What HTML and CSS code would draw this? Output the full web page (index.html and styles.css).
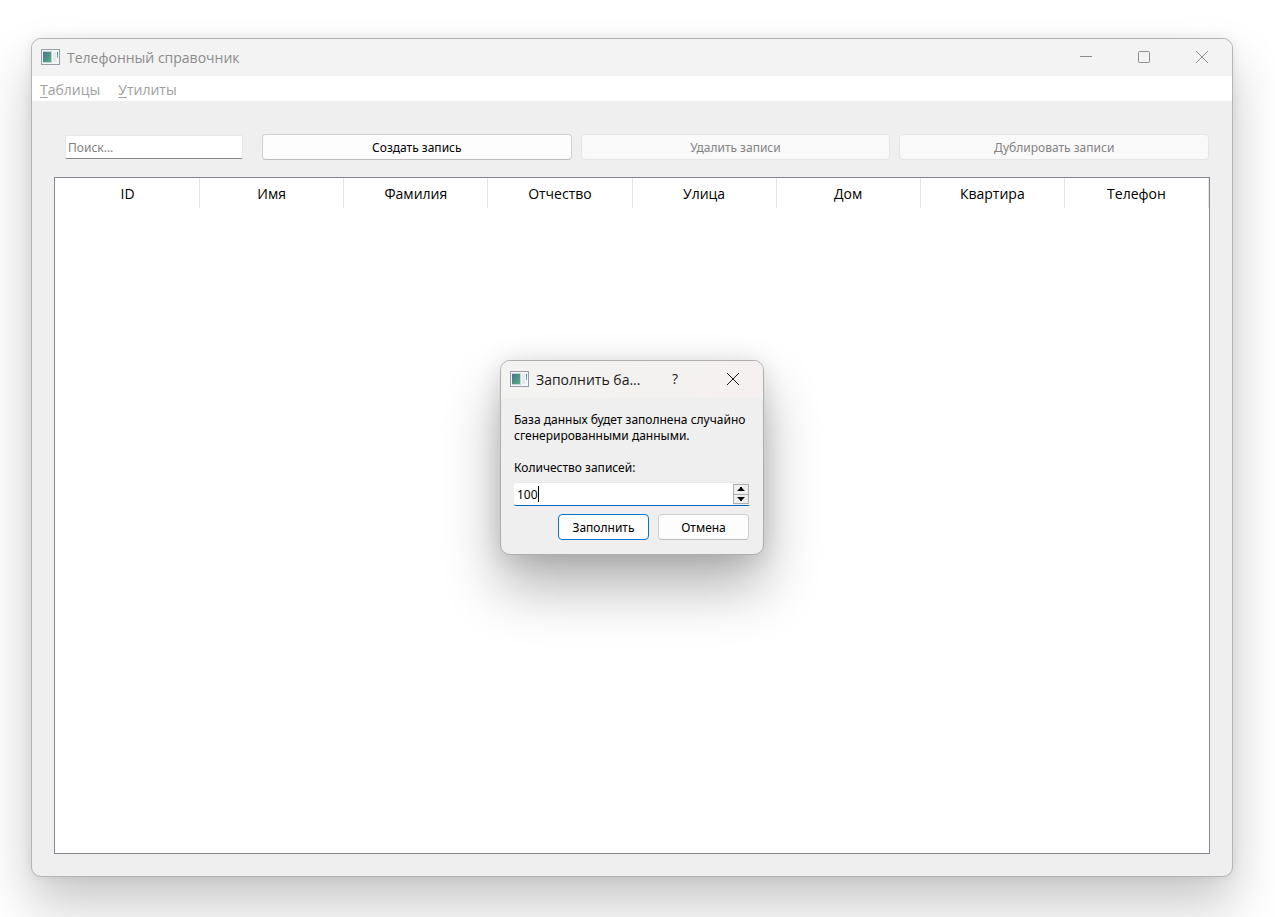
FILE: index.html
```html
<!DOCTYPE html>
<html lang="ru">
<head>
<meta charset="utf-8">
<meta name="viewport" content="width=device-width, initial-scale=1">
<title>Телефонный справочник</title>
<link rel="stylesheet" href="styles.css">
</head>
<body>
<svg class="defs" aria-hidden="true">
  <defs>
    <linearGradient id="pane" x1="0" y1="0" x2="1" y2="1">
      <stop offset="0" stop-color="#47738f"/>
      <stop offset="1" stop-color="#55b080"/>
    </linearGradient>
    <linearGradient id="strip" x1="0" y1="0" x2="0" y2="1">
      <stop offset="0" stop-color="#4b78b4"/>
      <stop offset="1" stop-color="#6cbf8e"/>
    </linearGradient>
    <symbol id="app" viewBox="0 0 19 16">
      <rect x=".5" y=".5" width="18" height="15" fill="#f4f6f8" stroke="#969ba6"/>
      <rect x="2" y="2" width="9" height="12" fill="#c3d3da"/>
      <rect x="2" y="3" width="8" height="10" fill="url(#pane)"/>
      <rect x="12" y="3" width="3" height="10" fill="#e4e9ee"/>
      <rect x="16" y="3" width="1" height="6" fill="url(#strip)"/>
    </symbol>
  </defs>
</svg>
<main class="window">
  <header class="titlebar">
    <svg class="app-icon" aria-hidden="true"><use href="#app"/></svg>
    <h1 class="title">Телефонный справочник</h1>
    <div class="controls">
      <button class="control" aria-label="Свернуть"><svg viewBox="0 0 14 14"><path d="M1 6.5h12"/></svg></button>
      <button class="control" aria-label="Развернуть"><svg viewBox="0 0 14 14"><rect x="1.5" y="1.5" width="11" height="11" rx="1"/></svg></button>
      <button class="control" aria-label="Закрыть"><svg viewBox="0 0 14 14"><path d="M1 1l12 12M13 1L1 13"/></svg></button>
    </div>
  </header>
  <nav class="menubar">
    <button class="menu"><u>Т</u>аблицы</button>
    <button class="menu"><u>У</u>тилиты</button>
  </nav>
  <div class="content">
    <div class="toolbar">
      <input class="search" type="text" placeholder="Поиск..." aria-label="Поиск">
      <div class="actions">
        <button class="button">Создать запись</button>
        <button class="button" disabled>Удалить записи</button>
        <button class="button" disabled>Дублировать записи</button>
      </div>
    </div>
    <div class="grid">
      <table class="records">
        <thead>
          <tr><th>ID</th><th>Имя</th><th>Фамилия</th><th>Отчество</th><th>Улица</th><th>Дом</th><th>Квартира</th><th>Телефон</th></tr>
        </thead>
      </table>
    </div>
  </div>
  <div class="overlay">
    <section class="dialog" role="dialog" aria-labelledby="dialog-title">
      <header class="titlebar dialog-bar">
        <svg class="app-icon" aria-hidden="true"><use href="#app"/></svg>
        <h2 class="title" id="dialog-title">Заполнить ба...</h2>
        <div class="controls">
          <button class="control help" aria-label="Справка">?</button>
          <button class="control" aria-label="Закрыть"><svg viewBox="0 0 14 14"><path d="M1 1l12 12M13 1L1 13"/></svg></button>
        </div>
      </header>
      <form class="form">
        <p class="message">База данных будет заполнена случайно сгенерированными данными.</p>
        <label class="label" for="count">Количество записей:</label>
        <div class="spinbox">
          <input class="count" id="count" type="text" inputmode="numeric" value="100">
          <span class="caret"></span>
          <div class="steps">
            <button class="step" type="button" aria-label="Больше"><svg viewBox="0 0 8 4"><path d="M0 4h8L5 1V0H3v1z"/></svg></button>
            <button class="step" type="button" aria-label="Меньше"><svg viewBox="0 0 8 4"><path d="M0 0h8L5 3v1H3V3z"/></svg></button>
          </div>
        </div>
        <div class="buttons">
          <button class="button primary" type="button">Заполнить</button>
          <button class="button" type="button">Отмена</button>
        </div>
      </form>
    </section>
  </div>
</main>
</body>
</html>
```
FILE: styles.css
```css
* {
  box-sizing: border-box;
}

body {
  display: flex;
  min-height: 100vh;
  margin: 0;
  padding: 38px 42px 40px 31px;
  background: #fff;
  color: #000;
  font: 12px/16px "Noto Sans", "Open Sans", sans-serif;
  overflow: hidden;
}

button,
input {
  margin: 0;
  font: inherit;
  color: inherit;
}

.defs {
  position: absolute;
  width: 0;
  height: 0;
}

.window {
  position: relative;
  display: flex;
  flex: 1;
  flex-direction: column;
  border: 1px solid #b4b4b4;
  border-radius: 10px;
  background: #efefef;
  box-shadow: 0 28px 52px rgba(0, 0, 0, .22), 0 0 12px rgba(0, 0, 0, .08);
}

.titlebar {
  display: flex;
  align-items: center;
  height: 37px;
  padding-left: 9px;
  border-radius: 9px 9px 0 0;
  background: #f3f3f3;
  color: #8c8c8c;
  font: 14px/20px "Open Sans", "Noto Sans", sans-serif;
}

.app-icon {
  width: 19px;
  height: 16px;
  margin: 0 7px 2px 0;
}

.title {
  margin: 0;
  font: inherit;
  white-space: nowrap;
}

.controls {
  display: flex;
  height: 36px;
  margin-left: auto;
  padding-right: 1px;
  align-self: flex-start;
}

.control {
  display: flex;
  align-items: center;
  justify-content: center;
  width: 58px;
  padding: 0;
  border: 0;
  background: none;
}

.control svg {
  width: 14px;
  height: 14px;
  fill: none;
  stroke: currentColor;
}

.menubar {
  display: flex;
  gap: 2px;
  height: 25px;
  background: #fff;
}

.menu {
  padding: 2px 8px 0;
  border: 0;
  background: none;
  color: #a0a0a0;
  font: 14px/20px "Open Sans", "Noto Sans", sans-serif;
}

.menu u {
  text-underline-offset: 2px;
}

.content {
  display: flex;
  flex: 1;
  flex-direction: column;
  gap: 17px;
  padding: 33px 22px 22px;
}

.toolbar {
  display: flex;
  align-items: center;
  gap: 19px;
  padding: 0 1px 0 11px;
}

.search {
  width: 178px;
  height: 24px;
  padding: 0 2px;
  border: 1px solid #e8e8e8;
  border-bottom-color: #868686;
  border-radius: 2px;
  background: #fff;
}

.search::placeholder {
  color: #7f7f7f;
  opacity: 1;
}

.actions {
  display: grid;
  flex: 1;
  grid-template-columns: repeat(3, 1fr);
  gap: 9px;
}

.button {
  height: 26px;
  padding: 2px 0 0;
  border: 1px solid #d0d0d0;
  border-bottom-color: #bcbcbc;
  border-radius: 4px;
  background: #fdfdfd;
}

.button:disabled {
  border-color: #e5e5e5;
  background: #f9f9f9;
  color: #838383;
}

.grid {
  flex: 1;
  padding-left: 1px;
  border: 1px solid #828790;
  background: #fff;
}

.records {
  width: 100%;
  border-spacing: 0;
  table-layout: fixed;
}

.records th {
  height: 30px;
  padding: 1px 0 0;
  border-right: 1px solid #e5e5e5;
  font: 14px/20px "Open Sans", "Noto Sans", sans-serif;
}

.overlay {
  position: absolute;
  inset: 0;
  display: flex;
  align-items: center;
  justify-content: center;
}

.dialog {
  width: 264px;
  border: 1px solid #aeaeae;
  border-radius: 10px;
  background: #efefef;
  box-shadow: 0 32px 56px rgba(0, 0, 0, .3), 0 2px 24px rgba(0, 0, 0, .12);
}

.dialog-bar {
  background: linear-gradient(100deg, #f3f3f2, #f4f2f0 70%, #f6f0f0);
  color: #1a1a1a;
}

.form {
  display: flex;
  flex-direction: column;
  padding: 14px 13px;
}

.message {
  margin: 0 -8px 16px 0;
}

.label {
  margin-bottom: 7px;
}

.spinbox {
  position: relative;
  display: flex;
  height: 23px;
  border-bottom: 1px solid #0067c0;
  border-radius: 2px;
  background: #fff;
  box-shadow: 0 -1px #e9e9e9;
}

.count {
  flex: 1;
  min-width: 0;
  padding: 2px 3px 0;
  border: 0;
  outline: 0;
  background: none;
}

.caret {
  position: absolute;
  top: 3px;
  left: 24px;
  width: 1px;
  height: 16px;
  background: #000;
}

.steps {
  display: flex;
  flex-direction: column;
  padding: 1px 1px 1px 0;
  background: #efefef;
}

.step {
  display: flex;
  flex: 1;
  align-items: center;
  justify-content: center;
  width: 16px;
  padding: 0;
  border: 1px solid #adadad;
  background: #efefef;
}

.step + .step {
  border-top: 0;
}

.step svg {
  width: 8px;
  height: 4px;
}

.buttons {
  display: flex;
  justify-content: flex-end;
  gap: 9px;
  padding: 8px 1px 0 0;
}

.buttons .button {
  width: 91px;
}

.buttons .primary {
  border-color: #0078d4;
}
```
